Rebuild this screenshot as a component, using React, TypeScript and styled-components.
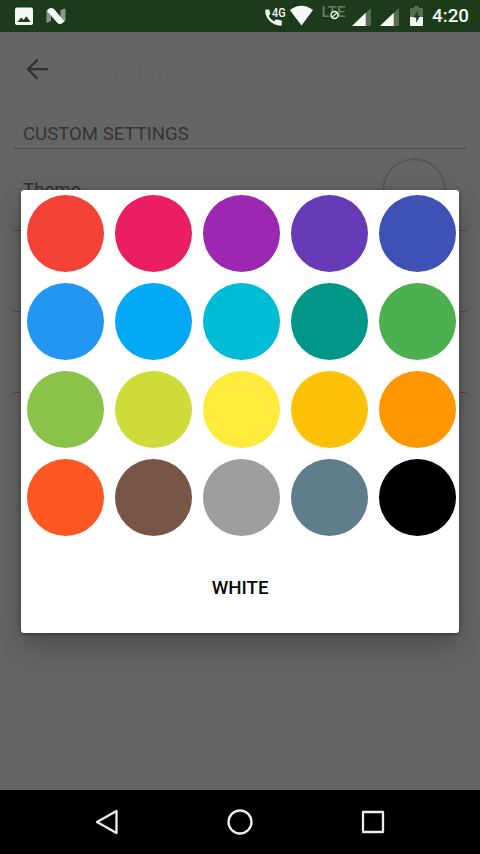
import React from "react";
import styled, { createGlobalStyle } from "styled-components";

const GlobalStyle = createGlobalStyle`
  * { box-sizing: border-box; }
  body { margin: 0; background: #000; font-family: Roboto, sans-serif; }
`;

const Screen = styled.div`
  position: relative;
  display: flex;
  flex-direction: column;
  width: 480px;
  height: 854px;
  overflow: hidden;
  background: #656565;
`;

const StatusBar = styled.header`
  display: flex;
  justify-content: space-between;
  height: 32px;
  flex: none;
  padding: 0 11px 0 14px;
  background: #1c3b1a;
`;

const StatusGroup = styled.div`
  display: flex;
  align-items: center;
`;

const StatusIcon = styled.svg<{ $gap?: number }>`
  display: block;
  flex: none;
  overflow: visible;
  margin-right: ${({ $gap = 0 }) => $gap}px;
`;

const SmallLabel = styled.text`
  font-family: Roboto, sans-serif;
`;

const Clock = styled.time`
  width: 37px;
  padding-top: 1px;
  color: #f4f6f4;
  font-size: 18.8px;
  font-weight: 500;
  line-height: 33px;
  white-space: nowrap;
`;

const Toolbar = styled.div`
  display: flex;
  align-items: center;
  height: 74px;
  flex: none;
  padding-left: 23px;
`;

const Title = styled.h1`
  margin: 3px 0 0 47px;
  color: #636363;
  font-size: 25.5px;
  font-weight: 500;
  line-height: 30px;
`;

const Settings = styled.main`
  flex: 1;
  padding: 0 14px;
`;

const SectionHeading = styled.h2`
  height: 43px;
  margin: 0;
  padding: 17px 9px 0;
  border-bottom: 1px solid #484848;
  color: #343434;
  font-size: 18.6px;
  font-weight: 400;
  line-height: 22px;
  white-space: nowrap;
`;

const SettingRow = styled.div<{ $height: number }>`
  display: flex;
  justify-content: space-between;
  align-items: center;
  height: ${({ $height }) => $height}px;
  padding: 1px 21px 0 9px;
  border-bottom: 1px solid #4d4d4d;
  color: #303030;
  font-size: 18.7px;
`;

const ThemePreview = styled.span`
  width: 62px;
  height: 62px;
  border: 1px solid #505050;
  border-radius: 50%;
  box-shadow: 0 0 2px #484848;
`;

const Dialog = styled.section`
  position: absolute;
  top: 189.5px;
  left: 21.3px;
  width: 437.5px;
  height: 443px;
  padding: 5.3px 0 0 5.4px;
  border-radius: 3px;
  background: #fff;
  box-shadow: 0 12px 30px rgba(0, 0, 0, 0.28), 0 1px 4px rgba(0, 0, 0, 0.35);
`;

const Palette = styled.div`
  display: grid;
  grid-template-columns: repeat(5, 77px);
  grid-auto-rows: 77px;
  gap: 11px;
`;

const Swatch = styled.button<{ $color: string }>`
  padding: 0;
  border: 0;
  border-radius: 50%;
  background: ${({ $color }) => $color};
`;

const WhiteButton = styled.button`
  display: block;
  width: 427px;
  height: 48px;
  margin-top: 28.7px;
  padding: 0;
  border: 0;
  background: transparent;
  color: #090909;
  font: 500 18.8px/48px Roboto, sans-serif;
  text-align: center;
`;

const NavigationBar = styled.nav`
  display: flex;
  justify-content: center;
  align-items: center;
  gap: 105px;
  height: 64px;
  flex: none;
  background: #000;
`;

const NavIcon = styled.svg`
  display: block;
  width: 28px;
  height: 28px;
  fill: none;
  stroke: #ededed;
  stroke-width: 2.3;
  stroke-linejoin: round;
`;

const colors = [
  "#f44336", "#e91e63", "#9c27b0", "#673ab7", "#3f51b5",
  "#2196f3", "#03a9f4", "#00bcd4", "#009688", "#4caf50",
  "#8bc34a", "#cddc39", "#ffeb3b", "#ffc107", "#ff9800",
  "#ff5722", "#795548", "#9e9e9e", "#607d8b", "#000000",
];

function Signal({ gap }: { gap: number }) {
  return (
    <StatusIcon $gap={gap} width="19" height="32">
      <path d="M0 26 19 8V26Z" fill="#56704f" />
      <path d="M0 26 13.7 12.8V26Z" fill="#f6f8f5" />
    </StatusIcon>
  );
}

export default function App() {
  return (
    <>
      <GlobalStyle />
      <Screen>
        <StatusBar>
          <StatusGroup>
            <StatusIcon $gap={12} width="20" height="32">
              <path fillRule="evenodd" fill="#f7f9f5" d="M3 7.5H17Q19 7.5 19 9.5V23Q19 25 17 25H3Q1 25 1 23V9.5Q1 7.5 3 7.5ZM3.5 22H16.5L12.4 16.2 9.5 20 7.2 17.4Z" />
            </StatusIcon>
            <StatusIcon width="20" height="32">
              <path d="M.5 10.5 5 9V21L.5 23ZM14.5 10 19.5 8.5V21L14.5 23Z" fill="#87968b" />
              <path d="M2 9.2Q5 7 8 9L18.5 21.5 15 24Q12.5 24.5 11 22.5L1 11Z" fill="#f2f5f1" />
            </StatusIcon>
          </StatusGroup>
          <StatusGroup>
            <StatusIcon $gap={1} width="24" height="32">
              <path d="M2.2 9.5H5.2L6.3 14 4.6 15.8C6 18.5 7.8 20 10.2 21.3L12.2 19.3 17.8 20.4V24.8Q17.8 25.8 16.8 25.8C8.7 25.5 1.2 19 1.2 10.8Q1.2 9.5 2.2 9.5Z" fill="#f6f8f5" />
              <SmallLabel x="8" y="16.5" fontSize="12" fontWeight="500" fill="#f6f8f5" textLength="13.5" lengthAdjust="spacingAndGlyphs">4G</SmallLabel>
            </StatusIcon>
            <StatusIcon $gap={8} width="24" height="32">
              <path d="M.8 10Q12.6 1.5 24 10L12.5 25.5Z" fill="#f6f8f5" />
            </StatusIcon>
            <StatusIcon $gap={6} width="25" height="32">
              <SmallLabel x=".5" y="17.2" fontSize="15" fontWeight="500" fill="#657b65" textLength="24" lengthAdjust="spacingAndGlyphs">LTE</SmallLabel>
              <circle cx="13.5" cy="15" r="3.5" stroke="#f3f5f2" strokeWidth="1.5" fill="#1c3b1a" />
              <path d="m11.3 17 4.7-4.4" stroke="#f3f5f2" strokeWidth="1.3" />
            </StatusIcon>
            <Signal gap={9} />
            <Signal gap={11} />
            <StatusIcon $gap={9} width="13" height="32">
              <path d="M0 9Q0 8 1 8H4V6H9V8H12Q13 8 13 9V17H0Z" fill="#56704f" />
              <path d="M0 17H13V25Q13 26 12 26H1Q0 26 0 25Z" fill="#f6f8f5" />
              <path d="M8.2 10 3.5 17.5H6.2V23L10 15.5H7.5Z" fill="#1c3b1a" />
            </StatusIcon>
            <Clock>4:20</Clock>
          </StatusGroup>
        </StatusBar>
        <Toolbar>
          <StatusIcon width="27" height="27" viewBox="0 0 27 27" fill="none" stroke="#303030" strokeWidth="2.3">
            <path d="M25 13.2H5.2M14.7 3.5 5 13.2l9.7 9.7" />
          </StatusIcon>
          <Title>Settings</Title>
        </Toolbar>
        <Settings>
          <SectionHeading>CUSTOM SETTINGS</SectionHeading>
          <SettingRow $height={82}>Theme<ThemePreview /></SettingRow>
          <SettingRow $height={81} />
          <SettingRow $height={81} />
        </Settings>
        <NavigationBar>
          <NavIcon viewBox="0 0 28 28"><path d="M4 14 23.5 3V25Z" /></NavIcon>
          <NavIcon viewBox="0 0 28 28"><circle cx="14" cy="14" r="11.5" /></NavIcon>
          <NavIcon viewBox="0 0 28 28"><rect x="4" y="4" width="20" height="20" /></NavIcon>
        </NavigationBar>
        <Dialog role="dialog" aria-label="Theme">
          <Palette>
            {colors.map((color) => <Swatch key={color} $color={color} aria-label={color} />)}
          </Palette>
          <WhiteButton>WHITE</WhiteButton>
        </Dialog>
      </Screen>
    </>
  );
}
